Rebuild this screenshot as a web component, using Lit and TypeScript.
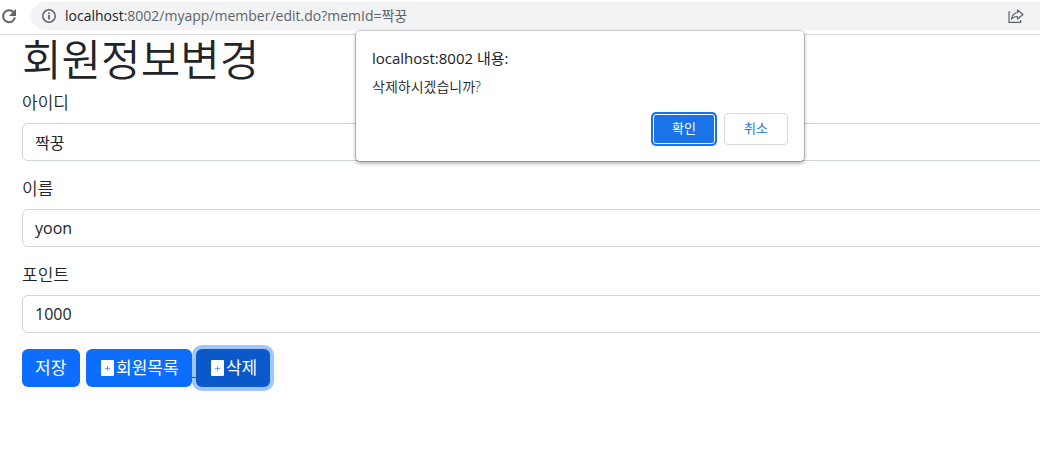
import { LitElement, html, css } from "lit";
import { customElement, property, state } from "lit/decorators.js";

@customElement("browser-bar")
class BrowserBar extends LitElement {
  @property() host = "";
  @property() path = "";

  static styles = css`
    :host {
      display: block;
    }
    .bar {
      display: flex;
      align-items: center;
      box-sizing: border-box;
      height: 35px;
      padding: 2px 0 4px;
      border-bottom: 1px solid #dadce0;
      background: #fff;
      overflow: hidden;
    }
    .reload,
    .share {
      display: flex;
      border: 0;
      padding: 0;
      background: none;
      color: #5f6368;
    }
    .reload {
      flex: none;
      width: 31px;
    }
    .address {
      flex: 1;
      display: flex;
      align-items: center;
      gap: 8px;
      min-width: 0;
      height: 28px;
      margin-right: -40px;
      padding: 0 56px 0 10px;
      border-radius: 14px;
      background: #f1f3f4;
      color: #5f6368;
    }
    .url {
      flex: 1;
      white-space: nowrap;
      font-size: 14px;
      line-height: 20px;
    }
    .host {
      color: #202124;
    }
  `;

  render() {
    return html`
      <div class="bar">
        <button class="reload" aria-label="새로고침">
          <svg width="18" height="18" viewBox="0 0 18 18" fill="none">
            <path d="M13.6 5.2A6 6 0 1 0 15 10.4" stroke="currentColor" stroke-width="2" />
            <path d="M16 2v7H9z" fill="currentColor" />
          </svg>
        </button>
        <div class="address">
          <svg width="16" height="16" viewBox="0 0 16 16" fill="none">
            <circle cx="8" cy="8" r="6.2" stroke="currentColor" stroke-width="1.5" />
            <path d="M8 7v4.4M8 4.4V6" stroke="currentColor" stroke-width="1.7" />
          </svg>
          <span class="url"><span class="host">${this.host}</span>${this.path}</span>
          <button class="share" aria-label="공유">
            <svg width="16" height="16" viewBox="0 0 16 16" fill="none" stroke="currentColor" stroke-width="1.2">
              <path d="M2.5 4H1v10.4h11.6V12" />
              <path d="M9.5 4.5V2l5.5 4.5L9.5 11V8.5C6.5 8.5 4.7 9.3 3.5 11.3 4 7.500 6 5 9.500 4.500z" stroke-linejoin="round" />
            </svg>
          </button>
        </div>
      </div>
    `;
  }
}

@customElement("confirm-dialog")
class ConfirmDialog extends LitElement {
  @property() heading = "";
  @property() message = "";

  static styles = css`
    :host {
      display: block;
    }
    .dialog {
      box-sizing: border-box;
      width: 448px;
      padding: 16px;
      border-radius: 4px;
      background: #fff;
      color: #202124;
      box-shadow: 0 0 0 1px rgba(0, 0, 0, 0.16), 0 2px 4px rgba(0, 0, 0, 0.4);
    }
    .heading {
      margin: 0;
      font-size: 15px;
      font-weight: 400;
      line-height: 22px;
    }
    .message {
      margin: 8px 0 0;
      font-size: 14px;
      font-weight: 350;
      line-height: 20px;
    }
    .actions {
      display: flex;
      justify-content: flex-end;
      gap: 8px;
      margin-top: 16px;
    }
    .action {
      width: 64px;
      height: 32px;
      padding: 0 0 2px;
      border: 1px solid #dadce0;
      border-radius: 4px;
      background: #fff;
      color: #1a73e8;
      font: inherit;
      font-size: 13px;
    }
    .primary {
      border-color: #1a73e8;
      background: #1a73e8;
      color: #fff;
      box-shadow: 0 0 0 1px #1a73e8, inset 0 0 0 1px #fff;
    }
  `;

  private close(ok: boolean) {
    this.dispatchEvent(new CustomEvent("answer", { detail: ok }));
  }

  render() {
    return html`
      <div class="dialog" role="alertdialog" aria-labelledby="heading" aria-describedby="message">
        <h2 class="heading" id="heading">${this.heading}</h2>
        <p class="message" id="message">${this.message}</p>
        <div class="actions">
          <button class="action primary" @click=${() => this.close(true)}>확인</button>
          <button class="action" @click=${() => this.close(false)}>취소</button>
        </div>
      </div>
    `;
  }
}

const glyph = html`
  <svg width="17" height="16" viewBox="0 0 17 16" aria-hidden="true">
    <rect x="2" width="13" height="16" rx="1" fill="#fff" />
    <path d="M8.500 6v5M6 8.500h5" stroke="#6f9df2" stroke-width="1" />
  </svg>
`;

@customElement("app-root")
class AppRoot extends LitElement {
  @state() private asking = true;

  private fields = [
    { id: "memId", label: "아이디", value: "짝꿍" },
    { id: "memName", label: "이름", value: "yoon" },
    { id: "point", label: "포인트", value: "1000" },
  ];

  static styles = css`
    :host {
      display: block;
      position: relative;
      min-height: 100vh;
      overflow: hidden;
      background: #fff;
      color: #212529;
      font-family: "Open Sans", "Noto Sans CJK KR", sans-serif;
      font-size: 16px;
      line-height: 24px;
    }
    .page {
      margin-right: -24px;
      padding: 0 12px 0 22px;
    }
    .title {
      margin: 0 0 6px;
      font-size: 43px;
      font-weight: 350;
      line-height: 50px;
    }
    .field {
      margin-bottom: 16px;
    }
    .label {
      display: block;
      width: fit-content;
      margin-bottom: 8px;
      font-size: 17px;
      font-weight: 350;
    }
    .input {
      display: block;
      box-sizing: border-box;
      width: 100%;
      height: 38px;
      padding: 6px 12px;
      border: 1px solid #ced4da;
      border-radius: 6px;
      background: #fff;
      color: inherit;
      font: inherit;
    }
    .buttons {
      display: flex;
    }
    .btn {
      display: inline-flex;
      align-items: center;
      box-sizing: border-box;
      min-width: 58px;
      height: 38px;
      padding: 0 13px;
      border: 0;
      border-radius: 6px;
      background: #0d6efd;
      color: #fff;
      font: inherit;
      font-size: 17px;
    }
    .list {
      position: relative;
      z-index: 1;
      margin-left: 6px;
      color: #0a58ca;
      font-size: 17px;
      white-space: pre;
    }
    .active {
      background: #0a58ca;
      box-shadow: 0 0 0 4px #9ec5fe;
    }
    .popup {
      position: absolute;
      z-index: 2;
      top: 31px;
      left: 356px;
    }
  `;

  render() {
    return html`
      <browser-bar host="localhost" path=":8002/myapp/member/edit.do?memId=짝꿍"></browser-bar>
      <main class="page">
        <h1 class="title">회원정보변경</h1>
        <form @submit=${(e: Event) => e.preventDefault()}>
          ${this.fields.map(
            (f) => html`
              <div class="field">
                <label class="label" for=${f.id}>${f.label}</label>
                <input class="input" id=${f.id} name=${f.id} type="text" .value=${f.value} />
              </div>
            `
          )}
          <div class="buttons">
            <button class="btn" type="submit">저장</button>
            <a class="list" href="#list"><span class="btn">${glyph}회원목록</span> </a>
            <button class="btn active" type="button" @click=${() => (this.asking = true)}>${glyph}삭제</button>
          </div>
        </form>
      </main>
      ${this.asking
        ? html`<confirm-dialog
            class="popup"
            heading="localhost:8002 내용:"
            message="삭제하시겠습니까?"
            @answer=${() => (this.asking = false)}
          ></confirm-dialog>`
        : ""}
    `;
  }
}
